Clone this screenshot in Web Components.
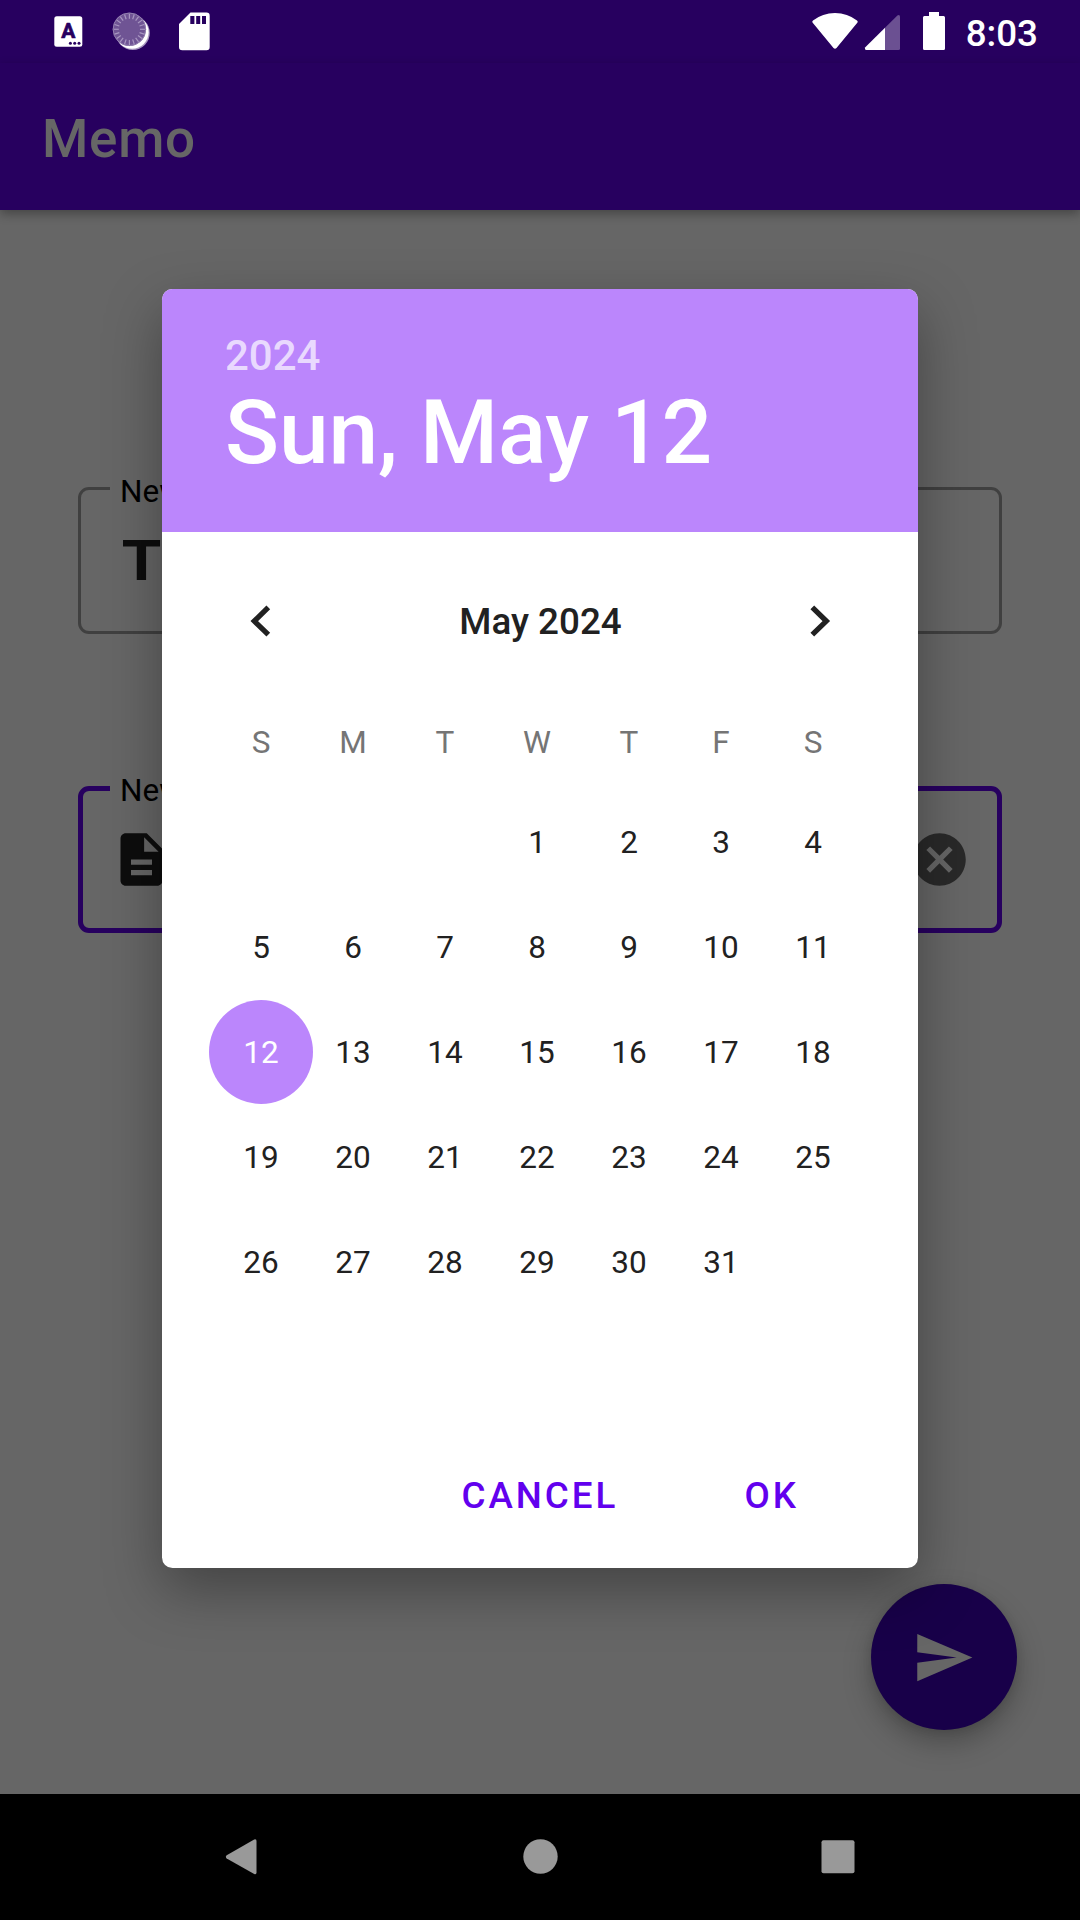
<!DOCTYPE html>
<html lang="en">
<head>
<meta charset="utf-8">
<title>Memo</title>
<style>
html,body{margin:0;padding:0}
body{width:1080px;height:1920px;overflow:hidden;font-family:Roboto,"Noto Sans",sans-serif;background:#666}
</style>
</head>
<body>
<memo-screen></memo-screen>
<script>
function define(name, html, setup) {
  const template = document.createElement('template');
  template.innerHTML = html;
  customElements.define(name, class extends HTMLElement {
    constructor() {
      super();
      this.attachShadow({ mode: 'open' }).appendChild(template.content.cloneNode(true));
    }
    connectedCallback() {
      if (setup) setup(this, this.shadowRoot);
    }
  });
}

define('status-bar', `
<style>
:host{display:flex;justify-content:space-between;height:63px;background:#27005f;color:#fff}
svg{display:block;flex:none}
.right{display:flex}
.time{font-size:36.75px;font-weight:500;line-height:68px;padding-right:42px}
</style>
<svg width="230" height="63" viewBox="0 0 230 63">
  <rect x="54.3" y="16.2" width="28" height="30.5" rx="2.5" fill="#fff"/>
  <text x="68.3" y="38.3" text-anchor="middle" font-family="Roboto" font-weight="700" font-size="21" fill="#27005f" stroke="#27005f" stroke-width=".7" stroke-linejoin="round">A</text>
  <g fill="#27005f"><circle cx="70.4" cy="43.2" r="1.5"/><circle cx="74.7" cy="43.2" r="1.5"/><circle cx="79" cy="43.2" r="1.5"/></g>
  <circle cx="132.8" cy="33" r="17" fill="#a897c0"/>
  <circle cx="132" cy="32.2" r="16.6" fill="#fff"/>
  <circle cx="129.4" cy="29.3" r="16.6" fill="#6f5494"/>
  <circle cx="129.4" cy="29.3" r="16.3" fill="none" stroke="#9683b2" stroke-width=".9"/>
  <g id="ticks" stroke="#a896c1" stroke-width="1.2"></g>
  <path d="M190.5 12.5H206.5Q209.7 12.5 209.7 15.7V47Q209.7 50.3 206.5 50.3H182.3Q179 50.3 179 47V24Z" fill="#fff"/>
  <path d="M190.3 16h4.1v8h-4.1zM196.2 16h4v8h-4zM202 16h4v8h-4z" fill="#27005f"/>
</svg>
<div class="right">
  <svg width="158" height="63" viewBox="808 0 158 63">
    <path d="M812.5 22.5Q811.8 21.5 813 20.6Q822.5 13 835 13T857 20.6Q858.2 21.5 857.5 22.5L836.5 48Q835 49.6 833.5 48Z" fill="#fff"/>
    <path d="M866.3 50Q864.2 49.6 865.3 47.3L885 27.8V50Z" fill="#fff"/>
    <path d="M885 27.8L897.4 15.4Q900 14 900 17V48.5Q900 50 898.5 50H885Z" fill="#6b5092"/>
    <path d="M929 12H939V16H943.6Q945 16 945 17.5V48.5Q945 50 943.6 50H924.4Q923 50 923 48.5V17.5Q923 16 924.4 16H929Z" fill="#fff"/>
  </svg>
  <span class="time">8:03</span>
</div>`, (host, root) => {
  const g = root.getElementById('ticks');
  for (let i = 0; i < 20; i++) {
    const a = i * Math.PI / 10, c = Math.cos(a), s = Math.sin(a);
    const l = document.createElementNS('http://www.w3.org/2000/svg', 'line');
    l.setAttribute('x1', 129.4 + 10.6 * c); l.setAttribute('y1', 29.3 + 10.6 * s);
    l.setAttribute('x2', 129.4 + 15.6 * c); l.setAttribute('y2', 29.3 + 15.6 * s);
    g.appendChild(l);
  }
});

define('app-bar', `
<style>
:host{display:flex;align-items:center;box-sizing:border-box;height:147px;padding:4px 42px 0;background:#27005f;color:#666;
font-size:53px;font-weight:500;letter-spacing:.7px;position:relative;box-shadow:0 4px 10px rgba(0,0,0,.32)}
</style><slot></slot>`);

define('outlined-field', `
<style>
:host{display:block;height:157px;width:924px}
fieldset{box-sizing:border-box;height:157px;margin:0;padding:0 0 0 calc(32px - var(--line,3px));border:var(--line,3px) solid var(--edge,#404040);border-radius:11px;min-width:0}
legend{padding:0 10px;font-size:31.5px;line-height:29px;height:var(--legend,23px);color:#000;margin-left:0}
.row{display:flex;align-items:center;justify-content:space-between}
</style>
<fieldset><legend><slot name="label"></slot></legend><div class="row"><slot></slot></div></fieldset>`);

define('send-button', `
<style>
:host{display:flex;align-items:center;justify-content:center;width:146px;height:146px;border-radius:50%;background:#180049;
box-shadow:0 13px 28px rgba(0,0,0,.26),0 2px 10px rgba(0,0,0,.1)}
</style>
<svg width="63" height="63" viewBox="0 0 24 24"><path d="M2.01 21L23 12 2.01 3 2 10l15 2-15 2z" fill="#666"/></svg>`);

define('nav-bar', `
<style>:host{display:flex;align-items:flex-start;justify-content:space-between;box-sizing:border-box;height:126px;background:#000;padding:44px 223px 0 225px}
svg{display:block}</style>
<svg width="36" height="38" viewBox="0 0 36 38"><path d="M1.700 17.200L29.200 1.400Q31.500 .5 31.500 3V34.500Q31.500 37 29.200 36L1.700 20.600Q0 18.900 1.700 17.200Z" fill="#999"/></svg>
<svg width="36" height="38" viewBox="-1 0 36 38"><circle cx="16.500" cy="18.500" r="17.200" fill="#999"/></svg>
<svg width="36" height="38" viewBox="0 0 36 38"><rect x=".5" y="2.300" width="33" height="33" rx="2" fill="#999"/></svg>`);

define('calendar-day', `
<style>
:host{display:flex;align-items:center;justify-content:center;height:105px;font-size:31.5px;color:#212121}
:host([selected]){color:#fff;width:104px;height:104px;margin-left:-6px;border-radius:50%;background:#bb86fc}
:host([heading]){color:#757575;height:95px}
</style><slot></slot>`);

define('month-grid', `
<style>
:host{display:grid;grid-template-columns:repeat(7,92px);grid-template-rows:95px;grid-auto-rows:105px;padding-left:53px}
</style>`, (host, root) => {
  const add = (text, attr) => {
    const d = document.createElement('calendar-day');
    d.textContent = text;
    if (attr) d.setAttribute(attr, '');
    root.appendChild(d);
    return d;
  };
  for (const c of 'SMTWTFS') add(c, 'heading');
  for (let n = 1; n <= 31; n++) {
    const d = add(String(n), n === +host.getAttribute('selected') ? 'selected' : '');
    if (n === 1) d.style.gridColumn = '4';
  }
});

define('text-button', `
<style>:host{display:block;font-size:36.75px;font-weight:500;letter-spacing:3px;line-height:50px;color:#6200ee}</style><slot></slot>`);

define('date-dialog', `
<style>
:host{display:flex;flex-direction:column;width:756px;height:1279px;border-radius:10.5px;background:#fff;overflow:hidden;
box-shadow:0 22px 56px rgba(0,0,0,.34)}
header{box-sizing:border-box;height:243px;padding:42px 63px 0;background:#bb86fc;color:#fff;font-weight:500}
.year{font-size:42px;line-height:50px;color:rgba(255,255,255,.7)}
.date{font-size:89.25px;line-height:104px;white-space:nowrap;letter-spacing:-.1px}
.month{display:flex;align-items:center;justify-content:space-between;height:147px;margin-top:15px;padding:0 86px 0 87px;
font-size:36.75px;font-weight:500;color:#212121}
svg{display:block}
.month span{padding-top:2px}
footer{display:flex;justify-content:flex-end;gap:126px;padding:0 119px 0 0;margin-top:156px}
</style>
<header><div class="year">2024</div><div class="date">Sun, May 12</div></header>
<div class="month">
  <svg width="24" height="32" viewBox="0 0 24 32"><path d="M19.300 2.400L5.300 16.100L19.300 29.600" fill="none" stroke="#212121" stroke-width="5.300"/></svg>
  <span>May 2024</span>
  <svg width="24" height="32" viewBox="0 0 24 32"><path d="M4.300 2.400L18.300 16.100L4.300 29.600" fill="none" stroke="#212121" stroke-width="5.300"/></svg>
</div>
<month-grid selected="12" style="margin-top:1px"></month-grid>
<footer><text-button>CANCEL</text-button><text-button>OK</text-button></footer>`);

define('memo-screen', `
<style>
:host{display:flex;flex-direction:column;width:1080px;height:1920px;position:relative;background:#666;overflow:hidden}
main{flex:1;display:flex;flex-direction:column;box-sizing:border-box;padding:267px 78px 0}
.second{--line:5px;--edge:#27005f;--legend:25px;margin-top:142px}
.title{font-size:55px;font-weight:700;line-height:64px;padding-left:12px;margin-top:29px;color:#0d0d0d;transform:scaleX(1.16);transform-origin:13px 0}
svg{display:block;margin-top:27px}
.clear{margin-right:26px}
send-button{margin:auto -14.500px 64px auto}
date-dialog{position:absolute;left:162px;top:289px}
</style>
<status-bar></status-bar>
<app-bar>Memo</app-bar>
<main>
  <outlined-field><span slot="label">New</span><span class="title">T</span></outlined-field>
  <outlined-field class="second"><span slot="label">New</span>
    <svg class="doc" width="63" height="63" viewBox="0 0 24 24"><path d="M14 2H6c-1.100 0-1.990.9-1.990 2L4 20c0 1.100.89 2 1.990 2H18c1.100 0 2-.9 2-2V8l-6-6zm2 16H8v-2h8v2zm0-4H8v-2h8v2zm-3-5V3.500L18.500 9H13z" fill="#0d0d0d"/></svg>
    <svg class="clear" width="63" height="63" viewBox="0 0 24 24"><path d="M12 2C6.470 2 2 6.470 2 12s4.470 10 10 10 10-4.470 10-10S17.530 2 12 2zm5 13.590L15.590 17 12 13.410 8.410 17 7 15.590 10.590 12 7 8.410 8.410 7 12 10.590 15.590 7 17 8.410 13.410 12 17 15.590z" fill="#292929"/></svg>
  </outlined-field>
  <send-button></send-button>
</main>
<nav-bar></nav-bar>
<date-dialog></date-dialog>`);
</script>
</body>
</html>
